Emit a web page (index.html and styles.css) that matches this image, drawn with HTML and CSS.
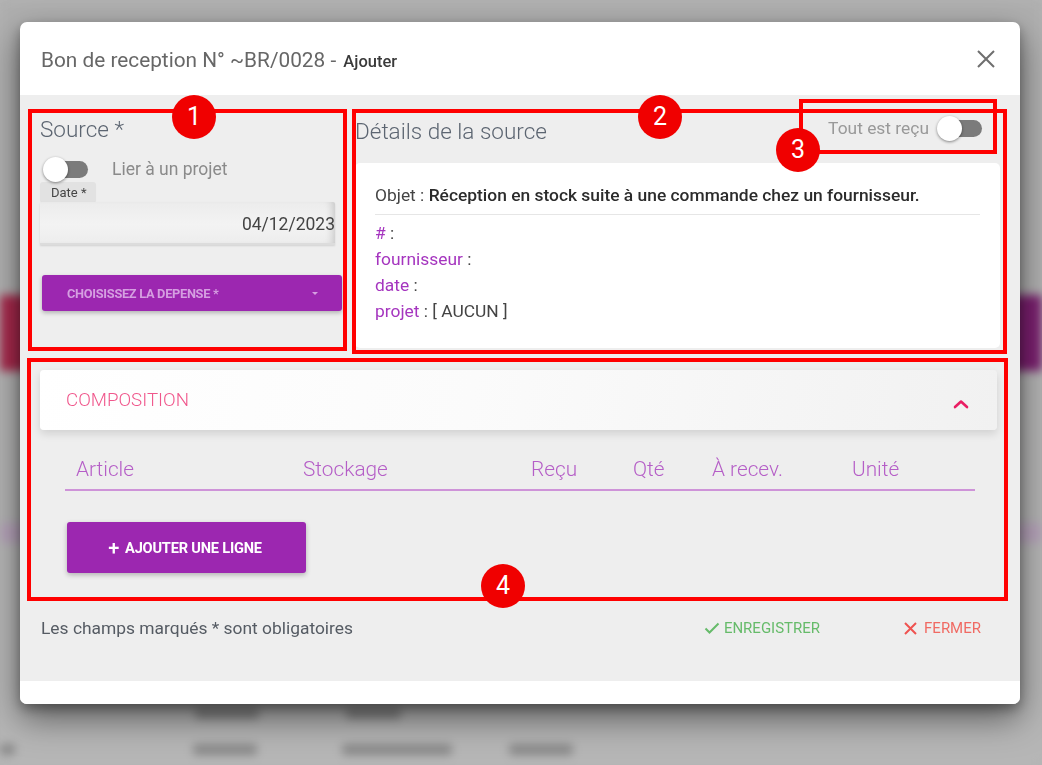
FILE: index.html
```html
<!DOCTYPE html>
<html lang="fr">
<head>
<meta charset="utf-8">
<title>Bon de reception</title>
<link rel="stylesheet" href="styles.css">
</head>
<body>
<div class="backdrop">
  <div class="bd-top"></div>
  <div class="bd-band"></div>
  <div class="bd-gap"></div>
  <div class="bd-line"></div>
  <div class="bd-rows">
    <div class="bd-row"><span class="blob w60"></span><span class="blob w60"></span></div>
    <div class="bd-row"><span class="blob w60"></span><span class="blob w60"></span></div>
    <div class="bd-row"><span class="blob w60"></span><span class="blob w60"></span></div>
    <div class="bd-row r4"><span class="blob w60"></span><span class="blob w55"></span></div>
    <div class="bd-row r5"><span class="blob w15"></span><span class="blob w60"></span><span class="blob w110"></span><span class="blob w60"></span></div>
  </div>
</div>

<div class="modal-layer">
  <div class="dialog">
    <header class="dlg-head">
      <h1 class="dlg-title">Bon de reception N° ~BR/0028 - <small>Ajouter</small></h1>
      <button class="close-btn" aria-label="Fermer">
        <svg width="18" height="18" viewBox="0 0 18 18"><path d="M1 1 L17 17 M17 1 L1 17" stroke="#6f6f6f" stroke-width="2" fill="none"/></svg>
      </button>
    </header>

    <main class="dlg-body">
      <section class="top-row">
        <div class="source-col">
          <h2 class="sec-title">Source *</h2>
          <label class="toggle-row">
            <span class="switch"><span class="knob"></span></span>
            <span class="toggle-label">Lier à un projet</span>
          </label>
          <span class="chip">Date *</span>
          <div class="date-field">04/12/2023</div>
          <button class="select-btn">
            <span>CHOISISSEZ LA DEPENSE *</span>
            <span class="caret"></span>
          </button>
        </div>

        <div class="details-col">
          <div class="details-head">
            <h2 class="sec-title">Détails de la source</h2>
            <label class="recu">
              <span class="recu-label">Tout est reçu</span>
              <span class="switch"><span class="knob"></span></span>
            </label>
          </div>
          <div class="card">
            <p class="objet">Objet : <strong>Réception en stock suite à une commande chez un fournisseur.</strong></p>
            <ul class="props">
              <li><span class="k">#</span> :</li>
              <li><span class="k">fournisseur</span> :</li>
              <li><span class="k">date</span> :</li>
              <li><span class="k">projet</span> : [ AUCUN ]</li>
            </ul>
          </div>
        </div>
      </section>

      <section class="composition">
        <div class="comp-head">
          <span class="comp-title">COMPOSITION</span>
          <svg class="chev" width="16" height="10" viewBox="0 0 16 10"><path d="M2 8 L8 2.5 L14 8" stroke="#e91e63" stroke-width="2.6" fill="none" stroke-linecap="round" stroke-linejoin="round"/></svg>
        </div>
        <div class="table-head">
          <span>Article</span>
          <span>Stockage</span>
          <span>Reçu</span>
          <span>Qté</span>
          <span>À recev.</span>
          <span>Unité</span>
        </div>
        <button class="add-btn"><span class="plus">+</span> AJOUTER UNE LIGNE</button>
      </section>

      <footer class="dlg-foot">
        <span class="note">Les champs marqués * sont obligatoires</span>
        <div class="actions">
          <button class="act save">
            <svg width="16" height="12" viewBox="0 0 16 12"><path d="M1.5 6.5 L5.5 10.5 L14.5 1.5" stroke="#66bb6a" stroke-width="2" fill="none"/></svg>
            ENREGISTRER
          </button>
          <button class="act close">
            <svg width="13" height="13" viewBox="0 0 13 13"><path d="M1 1 L12 12 M12 1 L1 12" stroke="#ef5350" stroke-width="2" fill="none"/></svg>
            FERMER
          </button>
        </div>
      </footer>
    </main>
    <div class="dlg-bottom"></div>
  </div>
</div>

<div class="annot box1"></div>
<div class="annot box2"></div>
<div class="annot box3"></div>
<div class="annot box4"></div>
<div class="badge b1">1</div>
<div class="badge b2">2</div>
<div class="badge b3">3</div>
<div class="badge b4">4</div>
</body>
</html>
```

FILE: styles.css
```css
* { box-sizing: border-box; }

html, body {
  margin: 0;
  padding: 0;
  width: 1042px;
  height: 765px;
  overflow: hidden;
  background: #b4b4b4;
  font-family: Roboto, "Liberation Sans", Arial, sans-serif;
}

/* blurred page behind the modal */
.backdrop {
  filter: blur(5px);
  height: 765px;
  overflow: hidden;
}
.bd-top { height: 295px; background: #afafaf; }
.bd-band {
  height: 76px;
  background: linear-gradient(90deg, #a8294c 0%, #8f2560 50%, #7a1f6f 100%);
}
.bd-gap { height: 152px; background: #b3b3b3; }
.bd-line { height: 20px; background: #b6a3ba; }
.bd-rows { background: #b6b6b6; }
.bd-row {
  height: 50px;
  display: flex;
  align-items: center;
  gap: 87px;
  padding-left: 195px;
}
.bd-row.r4 { height: 40px; }
.bd-row.r5 { height: 33px; padding-left: 0; gap: 0; }
.bd-row.r5 .w60 { margin-left: 178px; }
.bd-row.r5 .w110 { margin-left: 85px; }
.bd-row.r5 .w60 + .w110 + .w60 { margin-left: 57px; }
.blob { display: block; height: 11px; background: #888; border-radius: 4px; }
.w15 { width: 15px; }
.w55 { width: 55px; }
.w60 { width: 64px; }
.w110 { width: 110px; }

/* modal */
.modal-layer {
  position: fixed;
  inset: 0;
  padding: 22px 22px 0 20px;
}
.dialog {
  width: 1000px;
  background: #fff;
  border-radius: 7px;
  box-shadow: 0 14px 34px rgba(0,0,0,0.5), 0 5px 12px rgba(0,0,0,0.3);
  overflow: hidden;
}

.dlg-head {
  height: 73px;
  display: flex;
  align-items: center;
  justify-content: space-between;
  padding: 2px 22px 0 21px;
}
.dlg-title {
  margin: 0;
  font-size: 20.8px;
  font-weight: 400;
  color: #676767;
}
.dlg-title small {
  font-size: 16.5px;
  font-weight: 500;
  color: #3a3a3a;
  margin-left: 2px;
}
.close-btn {
  border: 0;
  background: none;
  padding: 0;
  width: 18px;
  height: 18px;
  display: block;
  margin-top: -1px;
  margin-right: 3px;
}
.close-btn svg { display: block; }

.dlg-body {
  background: #eeeeee;
  padding: 19px 20px 41px 20px;
}

.top-row {
  display: grid;
  grid-template-columns: 302px 1fr;
  column-gap: 13px;
  align-items: start;
}

.sec-title {
  margin: 0;
  font-size: 22.5px;
  line-height: 30px;
  font-weight: 300;
  color: #5c6571;
}

.source-col { display: flex; flex-direction: column; align-items: flex-start; }

.toggle-row {
  margin-top: 12px;
  height: 26px;
  display: flex;
  align-items: center;
  padding-left: 4px;
}
.switch {
  position: relative;
  width: 44px;
  height: 17px;
  border-radius: 9px;
  background: #7b7b7b;
  display: inline-block;
  flex: none;
}
.knob {
  position: absolute;
  left: -1px;
  top: -4px;
  width: 25px;
  height: 25px;
  border-radius: 50%;
  background: #fff;
  box-shadow: 0 1px 3px rgba(0,0,0,0.45);
}
.toggle-label {
  margin-left: 24px;
  font-size: 17.5px;
  color: #8a8a8a;
}

.chip {
  display: inline-block;
  height: 20px;
  line-height: 21px;
  padding: 0 9px 0 11px;
  background: #e2e2e2;
  border-radius: 3px;
  font-size: 13px;
  color: #454545;
  box-shadow: 0 1px 1px rgba(0,0,0,0.06);
}

.date-field {
  width: 295px;
  height: 43px;
  line-height: 45px;
  text-align: right;
  font-size: 17.5px;
  color: #444;
  background: linear-gradient(180deg, #ececec 0%, #f3f3f3 55%, #ededed 100%);
  border-bottom: 2px solid #dcdcdc;
  box-shadow: inset -8px 0 8px -6px rgba(0,0,0,0.18), 0 1px 2px rgba(0,0,0,0.12);
  border-radius: 2px 2px 0 0;
}

.select-btn {
  margin: 30px 0 0 2px;
  width: 300px;
  height: 36px;
  border: 0;
  border-radius: 3px;
  background: #9c27b0;
  box-shadow: 0 2px 4px rgba(0,0,0,0.25);
  display: flex;
  align-items: center;
  justify-content: space-between;
  padding: 0 24px 0 25px;
  font-family: inherit;
  font-size: 12.8px;
  font-weight: 700;
  color: #d59fe1;
  letter-spacing: -0.3px;
}
.caret {
  width: 0;
  height: 0;
  border-left: 3.5px solid transparent;
  border-right: 3.5px solid transparent;
  border-top: 3.5px solid #d59fe1;
}

.details-head {
  height: 49px;
  display: flex;
  justify-content: space-between;
  align-items: flex-start;
}
.details-head .sec-title { margin-top: 2px; }
.recu {
  display: flex;
  align-items: center;
  height: 28px;
  padding-right: 18px;
}
.recu-label {
  font-size: 17.4px;
  color: #999;
  margin-right: 9px;
}

.card {
  background: #fff;
  border-radius: 5px;
  padding: 20px 20px 24px 20px;
  height: 185px;
}
.objet {
  margin: 0;
  font-size: 17.4px;
  line-height: 24px;
  color: #444;
  padding-bottom: 7px;
  border-bottom: 1px solid #e6e6e6;
}
.objet strong { font-weight: 500; color: #2b2b2b; }
.props {
  list-style: none;
  margin: 0;
  padding: 5px 0 0 0;
}
.props li {
  font-size: 17.4px;
  line-height: 26px;
  color: #444;
}
.props .k { color: #a535bf; }

/* composition */
.composition { margin-top: 22px; }
.comp-head {
  height: 60px;
  border-radius: 4px;
  background: linear-gradient(100deg, #ffffff 0%, #fbfbfb 45%, #f1f1f1 100%);
  box-shadow: 0 4px 8px rgba(0,0,0,0.12);
  display: flex;
  align-items: center;
  justify-content: space-between;
  padding: 0 28px 0 26px;
  margin-right: 3px;
}
.comp-title {
  font-size: 18.7px;
  font-weight: 300;
  color: #f0578c;
}
.chev { display: block; margin-top: 8px; }

.table-head {
  margin: 25px 25px 0 25px;
  display: grid;
  grid-template-columns: 227px 228px 102px 79px 140px 1fr;
  border-bottom: 2px solid #ce93d8;
  padding-bottom: 6px;
}
.table-head span {
  padding-left: 11px;
  font-size: 20.8px;
  font-weight: 300;
  line-height: 28px;
  color: #b55ec7;
}

.add-btn {
  margin: 31px 0 0 27px;
  width: 239px;
  height: 51px;
  border: 0;
  border-radius: 3px;
  background: #9c27b0;
  color: #fff;
  font-family: inherit;
  font-size: 14.6px;
  font-weight: 700;
  box-shadow: 0 2px 5px rgba(0,0,0,0.25);
  display: flex;
  align-items: center;
  justify-content: center;
  padding-left: 3px;
  letter-spacing: -0.2px;
}
.plus { font-size: 20px; font-weight: 500; margin-right: 6px; line-height: 1; }

.dlg-foot {
  margin-top: 43px;
  display: flex;
  justify-content: space-between;
  align-items: center;
  height: 24px;
}
.note {
  font-size: 17.4px;
  color: #555b63;
  padding-left: 1px;
}
.actions {
  display: flex;
  align-items: center;
  gap: 84px;
  padding-right: 19px;
}
.act {
  border: 0;
  background: none;
  padding: 0;
  font-family: inherit;
  font-size: 15px;
  font-weight: 400;
  display: flex;
  align-items: center;
  gap: 4px;
}
.act svg { display: block; }
.act.save { color: #66bb6a; }
.act.close { color: #f06a63; gap: 7px; }

.dlg-bottom { height: 23px; background: #fff; }

/* annotation overlays */
.annot {
  position: absolute;
  border: 4.5px solid #ff0000;
}
.box1 { left: 28px; top: 109px; width: 319px; height: 242px; }
.box2 { left: 352px; top: 109px; width: 655px; height: 245px; }
.box3 { left: 799px; top: 99px; width: 198px; height: 55px; }
.box4 { left: 27px; top: 358px; width: 981px; height: 243px; }

.badge {
  position: absolute;
  width: 44px;
  height: 44px;
  border-radius: 50%;
  background: #f00000;
  color: #fff;
  font-size: 25px;
  line-height: 44px;
  text-align: center;
  font-weight: 400;
}
.b1 { left: 172px; top: 95px; }
.b2 { left: 638px; top: 95px; }
.b3 { left: 776px; top: 128px; }
.b4 { left: 481px; top: 564px; }
```
